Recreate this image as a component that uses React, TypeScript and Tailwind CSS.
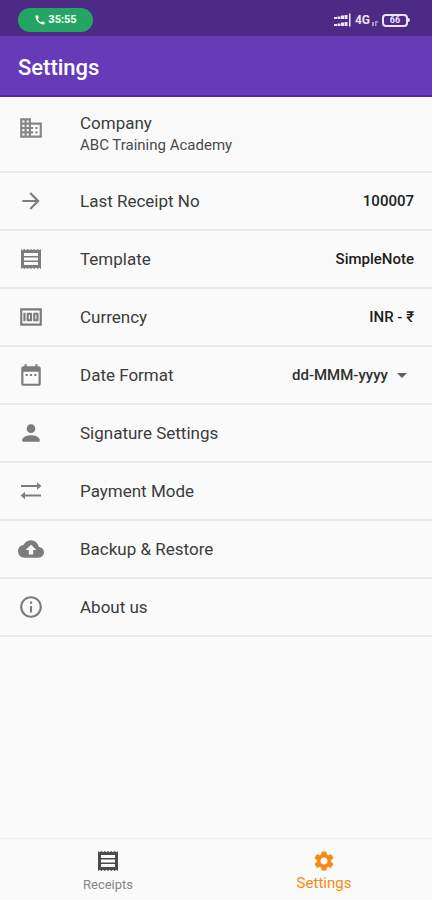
import type { ReactNode } from "react";
import {
  MdArrowDropDown,
  MdArrowForward,
  MdBackup,
  MdBusiness,
  MdCall,
  MdDateRange,
  MdInfoOutline,
  MdMoney,
  MdPerson,
  MdSettings,
} from "react-icons/md";

function ReceiptIcon({ className }: { className: string }) {
  return (
    <svg viewBox="0 0 20 20" fill="currentColor" fillRule="evenodd" className={className} aria-hidden="true">
      <path d="M0 0l1.7 1.3L3.3 0 5 1.3 6.7 0l1.6 1.3L10 0l1.7 1.3L13.3 0 15 1.3 16.7 0l1.6 1.3L20 0v20l-1.7-1.3-1.6 1.3-1.7-1.3-1.7 1.3-1.6-1.3L10 20l-1.7-1.3L6.7 20 5 18.7 3.3 20l-1.6-1.3L0 20zM3 4v3.100h14V4zM3 8.500v3h14v-3zM3 12.900V16h14v-3.100z" />
    </svg>
  );
}

function TransferIcon() {
  return (
    <svg viewBox="0 0 24 24" fill="currentColor" className="size-6" aria-hidden="true">
      <path d="M2 6.100h16V3.300L22.400 7 18 10.700V7.900H2zM22 17.400H6v2.800L1.600 16.500 6 12.800v2.800h16z" />
    </svg>
  );
}

function SignalIcon() {
  return (
    <svg viewBox="0 0 17 14" fill="currentColor" className="h-3.5 w-[17px]" aria-hidden="true">
      <path d="M0 4h3v2H0zM3.500 3.500h3V6h-3zM7 2.500h3V6H7zM10.500 2h3v4h-3zM15 .5h1.500v13H15zM0 11h3v2H0zM3.500 10.500h3V13h-3zM7 9.500h3V13H7zM10.500 9h3v4h-3z" />
    </svg>
  );
}

function StatusBar() {
  return (
    <div className="flex h-9 items-center justify-between bg-[#4c2a85] pt-1 pr-[22px] pl-[18px] text-[#ece4f8]">
      <div className="flex h-6 w-[75px] items-center justify-center gap-0.5 rounded-full bg-[#25a562] text-[11px] font-bold text-white">
        <MdCall className="size-3" aria-hidden="true" />
        <span>35:55</span>
      </div>
      <div className="flex items-center gap-1">
        <SignalIcon />
        <div className="flex items-end text-xs leading-4 font-bold">
          <span>4G</span>
          <svg viewBox="0 0 6 6" fill="currentColor" className="mb-0.5 ml-0.5 size-1.5 opacity-60" aria-hidden="true">
            <path d="M0 2h2v4H0zM3 1h3v1.500H4.500V6H3z" />
          </svg>
        </div>
        <div className="flex items-center">
          <div className="flex h-[13px] w-[26px] items-center justify-center rounded-sm border-2 border-current text-[9px] leading-none font-bold">
            66
          </div>
          <div className="h-1 w-0.5 rounded-r-sm bg-current" />
        </div>
      </div>
    </div>
  );
}

type RowProps = { icon: ReactNode; label: string; value?: string };

function Row({ icon, label, value }: RowProps) {
  return (
    <li className="border-b-2 border-[#e9e9e9]">
      <button type="button" className="flex h-14 w-full items-center px-[18px] text-left">
        <span className="flex w-[62px] shrink-0 text-[#7c7c7c]">{icon}</span>
        <span className="flex-1 text-[17px] leading-6 text-[#3c3c3c]">{label}</span>
        {value && <span className="text-[15px] leading-5 font-medium text-[#202020]">{value}</span>}
      </button>
    </li>
  );
}

export default function App() {
  return (
    <div className="flex min-h-screen flex-col bg-[#fafafa] font-[Roboto,sans-serif]">
      <StatusBar />
      <header className="flex h-[61px] items-center border-b-2 border-[#5a22a6] bg-[#673ab7] px-[18px] pt-1">
        <h1 className="text-[22px] leading-7 font-medium text-white">Settings</h1>
      </header>

      <main className="flex-1">
        <ul>
          <li className="border-b-2 border-[#e9e9e9]">
            <button type="button" className="flex h-[74px] w-full items-start px-[18px] pt-3.5 text-left">
              <span className="flex w-[62px] shrink-0 pt-1 text-[#868686]">
                <MdBusiness className="size-[26px]" />
              </span>
              <span className="flex flex-col">
                <span className="text-[17px] leading-6 text-[#3c3c3c]">Company</span>
                <span className="text-[15px] leading-5 text-[#4a4a4a]">ABC Training Academy</span>
              </span>
            </button>
          </li>
          <Row icon={<MdArrowForward className="size-[26px]" />} label="Last Receipt No" value="100007" />
          <Row
            icon={
              <span className="flex w-[26px] justify-center">
                <ReceiptIcon className="size-5" />
              </span>
            }
            label="Template"
            value="SimpleNote"
          />
          <Row icon={<MdMoney className="size-[26px]" />} label="Currency" value="INR - ₹" />
          <li className="flex h-[58px] items-center border-b-2 border-[#e9e9e9] px-[18px]">
            <span className="flex w-[62px] shrink-0 text-[#7c7c7c]">
              <MdDateRange className="size-[26px]" />
            </span>
            <label htmlFor="date-format" className="flex-1 text-[17px] leading-6 text-[#3c3c3c]">
              Date Format
            </label>
            <span className="grid items-center">
              <select
                id="date-format"
                defaultValue="dd-MMM-yyyy"
                className="col-start-1 row-start-1 appearance-none bg-transparent pr-[26px] text-[15px] leading-5 font-medium text-[#303030]"
              >
                <option>dd-MMM-yyyy</option>
              </select>
              <MdArrowDropDown className="pointer-events-none col-start-1 row-start-1 size-6 justify-self-end text-[#606060]" />
            </span>
          </li>
          <Row icon={<MdPerson className="size-[26px]" />} label="Signature Settings" />
          <Row
            icon={
              <span className="flex w-[26px] justify-center">
                <TransferIcon />
              </span>
            }
            label="Payment Mode"
          />
          <Row icon={<MdBackup className="size-[26px]" />} label="Backup & Restore" />
          <Row icon={<MdInfoOutline className="size-[26px]" />} label="About us" />
        </ul>
      </main>

      <nav className="grid h-[62px] grid-cols-2 border-t border-[#efefef]">
        <a href="#receipts" className="flex flex-col items-center pt-3 text-[#4a4a4a]">
          <ReceiptIcon className="size-5" />
          <span className="mt-1 text-[13px] leading-5 text-[#858585]">Receipts</span>
        </a>
        <a href="#settings" className="flex flex-col items-center pt-2.5 text-[#f78a14]">
          <MdSettings className="size-6" />
          <span className="text-[15px] leading-5">Settings</span>
        </a>
      </nav>
    </div>
  );
}
